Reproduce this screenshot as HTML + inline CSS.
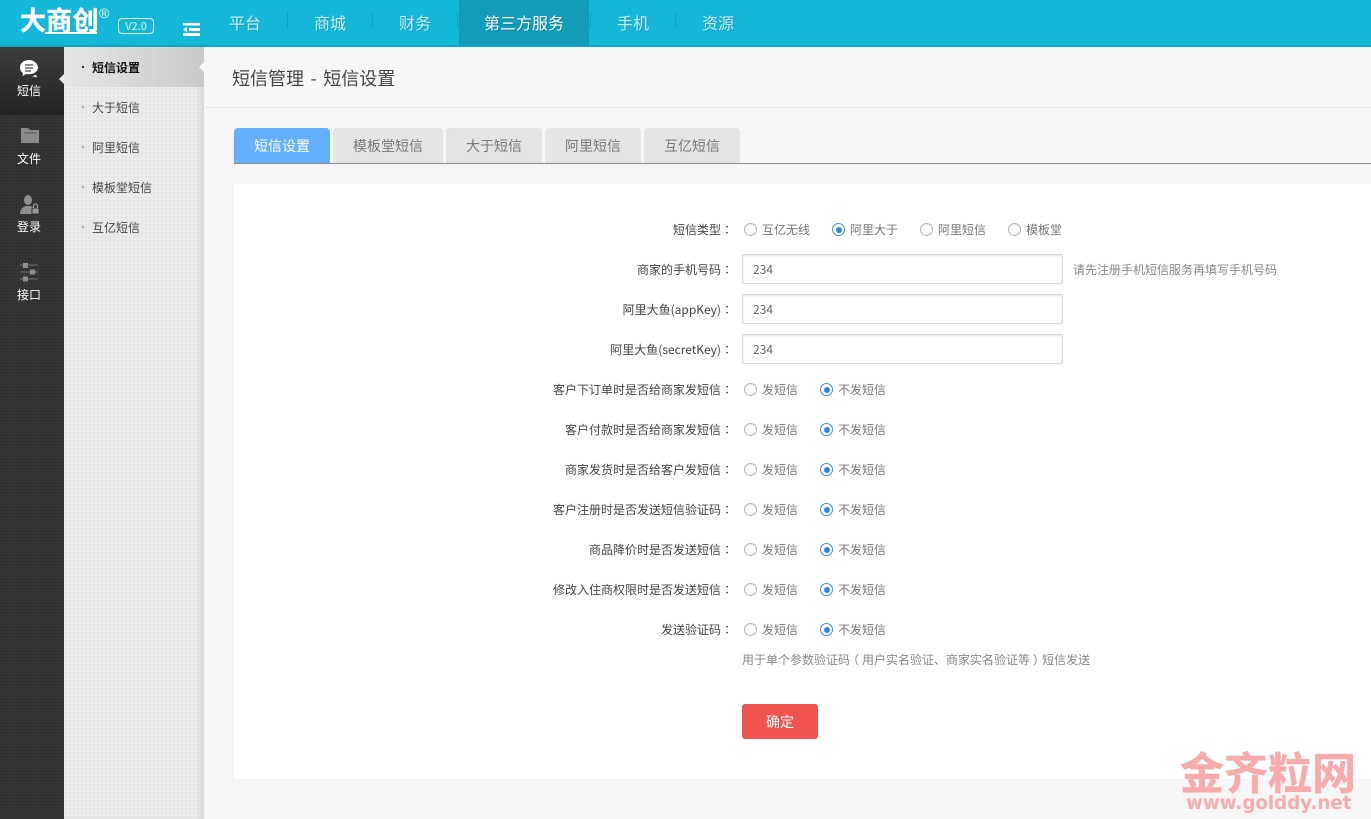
<!DOCTYPE html>
<html lang="zh"><head><meta charset="utf-8"><title>短信设置</title>
<style>
*{box-sizing:border-box}
html,body{margin:0;padding:0}
body{width:1371px;height:819px;overflow:hidden;position:relative;background:#f6f6f6;font-family:"Noto Sans CJK SC","Liberation Sans",sans-serif;font-size:12px;color:#444}
.a{position:absolute;white-space:nowrap}
.c{font-family:"Noto Sans CJK TC","Noto Sans CJK SC",sans-serif}
#top{left:0;top:0;width:1371px;height:47px;background:#15b7d9;border-bottom:2px solid #11a3c2}
.nav{top:0;height:45px;line-height:44px;font-size:16px;color:#c9eef6;text-align:center;text-shadow:1px 1px 1px rgba(0,0,0,.15)}
.sep{top:13px;width:1px;height:16px;background:#11a0bf}
#side{left:0;top:47px;width:64px;height:772px;background:#363636;background-image:radial-gradient(#2e2e2e 1px,transparent 1px);background-size:3px 3px}
#sideact{left:0;top:47px;width:64px;height:68px;background:linear-gradient(#3d3d3d,#232323)}
.st{left:0;width:58px;text-align:center;color:#fff;font-size:12px;line-height:16px}
#sub{left:64px;top:47px;width:140px;height:772px;background:#ebebeb;background-image:radial-gradient(#e0e0e0 1px,transparent 1px);background-size:4px 4px;box-shadow:inset -9px 0 8px -6px rgba(0,0,0,.1)}
#subact{left:64px;top:47px;width:140px;height:40px;background:linear-gradient(90deg,#e6e6e6,#c9c9c9)}
.si{left:92px;font-size:12px;line-height:16px;color:#444}
.dot{left:82px;width:2px;height:2px;background:#aaa}
#head{left:204px;top:47px;width:1167px;height:61px;background:#f7f7f7;border-bottom:1px solid #e9e9e9}
.tab{top:128px;height:35px;background:#e5e5e5;border-radius:4px 4px 0 0;text-align:center;line-height:36px;font-size:14px;color:#777}
#panel{left:234px;top:184px;width:1137px;height:595px;background:#fff}
.l{width:491px;left:242px;text-align:right;line-height:16px;color:#444}
.r{width:13px;height:13px;border:1px solid #b5b5b5;border-radius:50%;background:#fff;box-shadow:inset 0 1px 1px rgba(0,0,0,.08)}
.r.on{border-color:#3f8fe0;box-shadow:none}
.r.on:after{content:"";position:absolute;left:2.5px;top:2.5px;width:6px;height:6px;border-radius:50%;background:#2f86e2}
.t{color:#777;line-height:16px}
.in{left:742px;width:321px;height:30px;border:1px solid #d9d9d9;border-radius:2px;box-shadow:inset 0 1px 2px rgba(0,0,0,.1);background:#fff;padding-left:10px;line-height:29px;color:#666;font-size:12px}
</style></head><body>
<div class="a" id="top"></div>
<div class="a" style="left:20px;top:1px;font-size:26px;font-weight:bold;color:#fff;line-height:38px;letter-spacing:.3px;-webkit-text-stroke:.4px #fff">大商创</div>
<div class="a" style="left:45px;top:32px;width:52px;height:2px;background:#fff"></div>
<div class="a" style="left:99px;top:5px;font-size:14px;color:#e4f7fb;line-height:16px;font-family:'Liberation Sans',sans-serif">®</div>
<div class="a" style="left:118px;top:18px;width:36px;height:16px;border:1px solid #dff5fa;border-radius:4px;color:#dff5fa;font-size:11px;line-height:14px;text-align:center">V2.0</div>
<svg class="a" style="left:183px;top:23px" width="17" height="13" viewBox="0 0 17 13"><path d="M0 0h17v2.500H0zM6 5h11v3H6zM0 10h17v3H0zM0 6.500L4 4v5z" fill="#fff"/></svg>
<div class="a nav" style="left:229px;width:32px">平台</div><div class="a sep" style="left:287px"></div>
<div class="a nav" style="left:314px;width:32px">商城</div><div class="a sep" style="left:372px"></div>
<div class="a nav" style="left:399px;width:32px">财务</div><div class="a sep" style="left:457px"></div>
<div class="a" style="left:459px;top:0;width:130px;height:45px;background:#139cb9"></div>
<div class="a nav" style="left:484px;width:80px;color:#fff">第三方服务</div><div class="a sep" style="left:590px"></div>
<div class="a nav" style="left:617px;width:32px">手机</div><div class="a sep" style="left:675px"></div>
<div class="a nav" style="left:702px;width:32px">资源</div>

<div class="a" id="side"></div><div class="a" id="sideact"></div>
<svg class="a" style="left:19px;top:59px" width="20" height="20" viewBox="0 0 20 20"><path d="M10 1C5 1 1 4 1 8.500c0 2.500 1.200 4.500 3 5.700L3.500 17l3.500-2c1 .2 2 .3 3 .3 5 0 9-3 9-6.800S15 1 10 1z" fill="#fff"/><path d="M13 17.500l5 1-1-3z" fill="#ddd"/><path d="M6 6h8M6 9h8M6 12h6" stroke="#444" stroke-width="1.300"/></svg>
<div class="a st" style="top:83px">短信</div>
<svg class="a" style="left:21px;top:127px" width="18" height="16" viewBox="0 0 18 16"><path d="M0 1h7l2 2h9v13H0z" fill="#8a8a8a"/><path d="M3 6h12" stroke="#555"/></svg>
<div class="a st" style="top:151px">文件</div>
<svg class="a" style="left:20px;top:195px" width="20" height="20" viewBox="0 0 20 20"><ellipse cx="8" cy="5" rx="4" ry="5" fill="#8f8f8f"/><path d="M0 19c0-5 3-7 6-8h4c2 .5 3 1 4 2l-2 6z" fill="#8f8f8f"/><rect x="12" y="13" width="7" height="6" fill="#9a9a9a" stroke="#363636"/><path d="M13.500 13v-2a2 2 0 0 1 4 0v2" fill="none" stroke="#9a9a9a" stroke-width="1.300"/></svg>
<div class="a st" style="top:219px">登录</div>
<svg class="a" style="left:20px;top:262px" width="19" height="20" viewBox="0 0 19 20"><path d="M0 3h18M0 10h18M0 17h18" stroke="#777" stroke-width="1"/><rect x="3" y="1" width="5" height="5" fill="#8f8f8f"/><rect x="10" y="7.500" width="5" height="5" fill="#8f8f8f"/><rect x="3" y="14.500" width="5" height="5" fill="#8f8f8f"/></svg>
<div class="a st" style="top:287px">接口</div>

<div class="a" id="sub"></div><div class="a" id="subact"></div>
<div class="a" style="left:59px;top:74px;border:5px solid transparent;border-right-color:#e9e9e9;border-left:0"></div>
<div class="a" id="head"></div>
<div class="a" style="left:199px;top:62px;border:5px solid transparent;border-right-color:#f7f7f7;border-left:0"></div>
<div class="a dot" style="top:66px;background:#222"></div><div class="a si" style="top:60px;color:#111;font-weight:bold">短信设置</div>
<div class="a dot" style="top:106px"></div><div class="a si" style="top:100px">大于短信</div>
<div class="a dot" style="top:146px"></div><div class="a si" style="top:140px">阿里短信</div>
<div class="a dot" style="top:186px"></div><div class="a si" style="top:180px">模板堂短信</div>
<div class="a dot" style="top:226px"></div><div class="a si" style="top:220px">互亿短信</div>

<div class="a" style="left:232px;top:65px;font-size:18px;line-height:26px;color:#444;word-spacing:2.500px">短信管理 - 短信设置</div>

<div class="a" style="left:234px;top:163px;width:1137px;height:1px;background:#8a8a8a"></div>
<div class="a tab" style="left:234px;width:96px;background:#62b0ff;color:#fff">短信设置</div>
<div class="a tab" style="left:333px;width:110px">模板堂短信</div>
<div class="a tab" style="left:446px;width:96px">大于短信</div>
<div class="a tab" style="left:545px;width:96px">阿里短信</div>
<div class="a tab" style="left:644px;width:96px">互亿短信</div>

<div class="a" id="panel"></div>

<div class="a l" style="top:222px">短信类型<span class="c" lang="zh-TW">：</span></div>
<div class="a r" style="left:744px;top:223px"></div><div class="a t" style="left:762px;top:222px">互亿无线</div>
<div class="a r on" style="left:832px;top:223px"></div><div class="a t" style="left:850px;top:222px">阿里大于</div>
<div class="a r" style="left:920px;top:223px"></div><div class="a t" style="left:938px;top:222px">阿里短信</div>
<div class="a r" style="left:1008px;top:223px"></div><div class="a t" style="left:1026px;top:222px">模板堂</div>

<div class="a l" style="top:262px">商家的手机号码<span class="c" lang="zh-TW">：</span></div><div class="a in" style="top:254px">234</div>
<div class="a t" style="left:1073px;top:262px;color:#888">请先注册手机短信服务再填写手机号码</div>
<div class="a l" style="top:302px">阿里大鱼(appKey)<span class="c" lang="zh-TW">：</span></div><div class="a in" style="top:294px">234</div>
<div class="a l" style="top:342px">阿里大鱼(secretKey)<span class="c" lang="zh-TW">：</span></div><div class="a in" style="top:334px">234</div>

<div class="a l" style="top:382px">客户下订单时是否给商家发短信<span class="c" lang="zh-TW">：</span></div>
<div class="a r" style="left:744px;top:383px"></div><div class="a t" style="left:762px;top:382px">发短信</div>
<div class="a r on" style="left:820px;top:383px"></div><div class="a t" style="left:838px;top:382px">不发短信</div>

<div class="a l" style="top:422px">客户付款时是否给商家发短信<span class="c" lang="zh-TW">：</span></div>
<div class="a r" style="left:744px;top:423px"></div><div class="a t" style="left:762px;top:422px">发短信</div>
<div class="a r on" style="left:820px;top:423px"></div><div class="a t" style="left:838px;top:422px">不发短信</div>

<div class="a l" style="top:462px">商家发货时是否给客户发短信<span class="c" lang="zh-TW">：</span></div>
<div class="a r" style="left:744px;top:463px"></div><div class="a t" style="left:762px;top:462px">发短信</div>
<div class="a r on" style="left:820px;top:463px"></div><div class="a t" style="left:838px;top:462px">不发短信</div>

<div class="a l" style="top:502px">客户注册时是否发送短信验证码<span class="c" lang="zh-TW">：</span></div>
<div class="a r" style="left:744px;top:503px"></div><div class="a t" style="left:762px;top:502px">发短信</div>
<div class="a r on" style="left:820px;top:503px"></div><div class="a t" style="left:838px;top:502px">不发短信</div>

<div class="a l" style="top:542px">商品降价时是否发送短信<span class="c" lang="zh-TW">：</span></div>
<div class="a r" style="left:744px;top:543px"></div><div class="a t" style="left:762px;top:542px">发短信</div>
<div class="a r on" style="left:820px;top:543px"></div><div class="a t" style="left:838px;top:542px">不发短信</div>

<div class="a l" style="top:582px">修改入住商权限时是否发送短信<span class="c" lang="zh-TW">：</span></div>
<div class="a r" style="left:744px;top:583px"></div><div class="a t" style="left:762px;top:582px">发短信</div>
<div class="a r on" style="left:820px;top:583px"></div><div class="a t" style="left:838px;top:582px">不发短信</div>

<div class="a l" style="top:622px">发送验证码<span class="c" lang="zh-TW">：</span></div>
<div class="a r" style="left:744px;top:623px"></div><div class="a t" style="left:762px;top:622px">发短信</div>
<div class="a r on" style="left:820px;top:623px"></div><div class="a t" style="left:838px;top:622px">不发短信</div>

<div class="a t" style="left:742px;top:652px;color:#888">用于单个参数验证码<span style="position:relative;left:-3px">（</span>用户实名验证、商家实名验证等<span style="position:relative;left:3px">）</span>短信发送</div>
<div class="a" style="left:742px;top:704px;width:76px;height:35px;background:#ef5350;border-radius:3px;color:#fff;text-align:center;line-height:36px;font-size:14px">确定</div>

<div class="a" style="left:1180px;top:745px;font-size:44px;line-height:50px;font-weight:bold;color:#f8abab;letter-spacing:0;-webkit-text-stroke:.4px #f8abab">金齐粒网</div>
<div class="a" style="left:1186px;top:792px;font-size:19px;line-height:22px;font-weight:bold;color:#f8abab;font-family:'DejaVu Sans',sans-serif;transform-origin:left;transform:scaleX(.96)">www.golddy.net</div>
</body></html>
